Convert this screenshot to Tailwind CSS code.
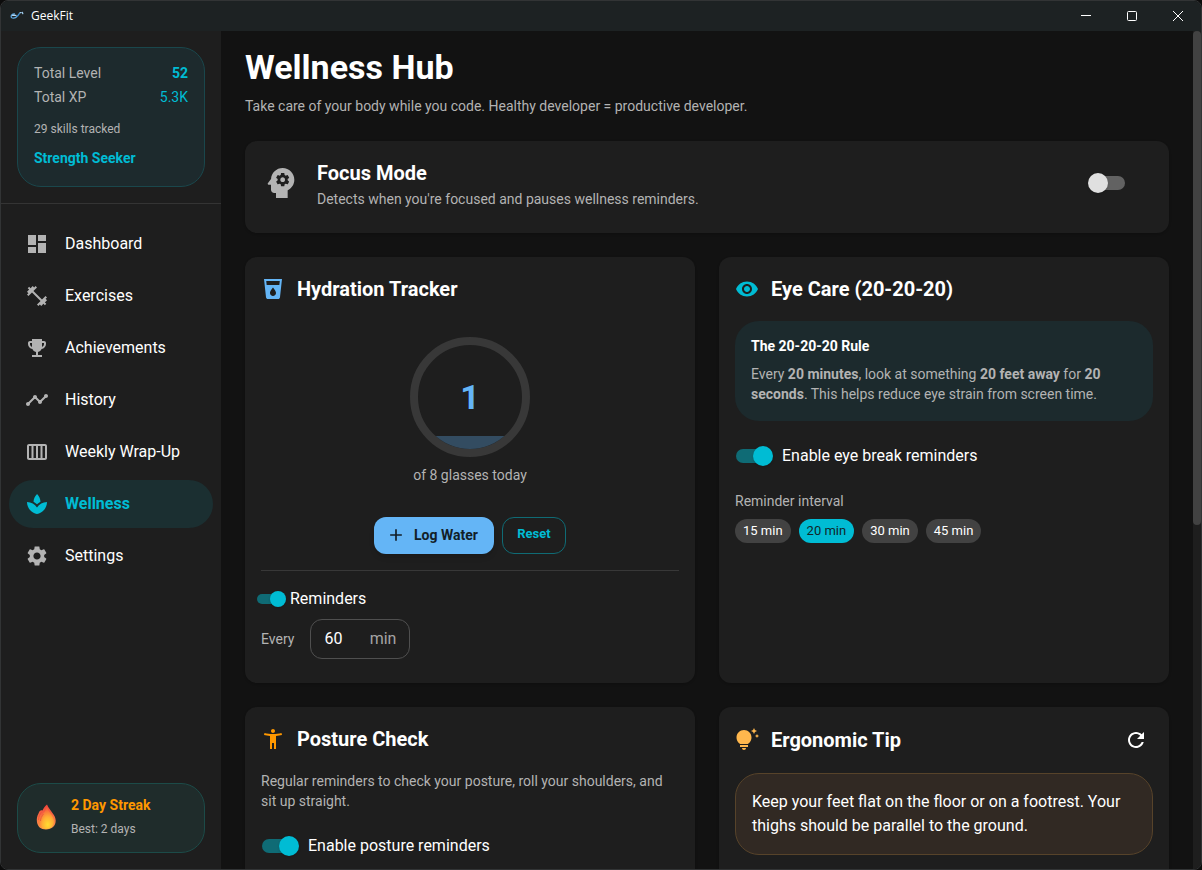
<!DOCTYPE html>
<html lang="en">
<head>
  <meta charset="UTF-8" />
  <meta name="viewport" content="width=device-width, initial-scale=1.0"/>
  <title>GeekFit</title>
  <script src="https://cdn.jsdelivr.net/npm/@tailwindcss/browser@4"></script>
</head>
<body class="h-screen bg-[#0c0c0c] font-['Roboto',sans-serif] text-base text-white">

  <div class="flex h-full flex-col overflow-hidden rounded-lg border border-[#323435] bg-[#121212]">

    <!-- Title bar -->
    <header class="flex h-[30px] shrink-0 items-center bg-[#1d2223] pl-[9px]">
      <svg class="mr-[7px] h-3.5 w-3.5" viewBox="0 0 14 14" fill="none" stroke-linecap="round" stroke-width="1.3">
        <path d="M4.5 5C2 5 .8 6.700 1.200 8.100c.5 1.500 4.300 1.300 5.700-.6" stroke="#5fa8e0"/>
        <path d="M2.500 6.300h3.500" stroke="#b9d7ee"/>
        <path d="M7.300 7c1.200-.3 1.400-2.400 2.300-2.400" stroke="#3d8fd0"/>
        <path d="M10 3.600h1M12.300 3.300l.5 1.400" stroke="#9cc8e8"/>
      </svg>
      <span class="flex-1 font-['Open_Sans',sans-serif] text-xs">GeekFit</span>
      <button aria-label="Minimize" class="flex h-full w-[46px] items-center justify-center">
        <svg class="h-2.5 w-2.5" viewBox="0 0 10 10" stroke="#fff"><path d="M0 4.500h10"/></svg>
      </button>
      <button aria-label="Maximize" class="flex h-full w-[46px] items-center justify-center">
        <svg class="h-2.5 w-2.5" viewBox="0 0 10 10" fill="none" stroke="#fff"><rect x=".5" y=".5" width="9" height="9" rx="1"/></svg>
      </button>
      <button aria-label="Close" class="flex h-full w-[46px] items-center justify-center">
        <svg class="h-2.5 w-2.5" viewBox="0 0 10 10" stroke="#fff"><path d="M0 0l10 10M10 0L0 10"/></svg>
      </button>
    </header>

    <div class="flex min-h-0 flex-1">

      <!-- Sidebar -->
      <aside class="flex w-[220px] shrink-0 flex-col bg-[#1e1e1e]">
        <div class="m-4 rounded-3xl border border-[#1a474c] bg-[#1d2a2d] px-4 pt-[15px] pb-[17px] text-sm leading-5 text-[#b3b3b3]">
          <div class="flex justify-between"><span>Total Level</span><span class="font-bold text-[#00bcd4]">52</span></div>
          <div class="mt-1 flex justify-between"><span>Total XP</span><span class="text-[#00bcd4]">5.3K</span></div>
          <p class="mt-3.5 text-xs leading-4">29 skills tracked</p>
          <p class="mt-2.5 leading-[22px] font-bold text-[#00bcd4]">Strength Seeker</p>
        </div>

        <nav class="flex flex-1 flex-col gap-1 border-t border-[#343434] px-2 py-4">
          <a href="#" class="flex h-12 items-center gap-4 rounded-full px-4">
            <svg class="h-6 w-6 fill-[#b3b3b3]" viewBox="0 0 24 24"><path d="M3 13h8V3H3zm0 8h8v-6H3zm10 0h8V11h-8zm0-18v6h8V3z"/></svg>
            Dashboard
          </a>
          <a href="#" class="flex h-12 items-center gap-4 rounded-full px-4">
            <svg class="h-6 w-6 fill-[#b3b3b3]" viewBox="0 0 24 24"><path d="M20.57 14.86 22 13.43 20.57 12 17 15.57 8.43 7 12 3.43 10.57 2 9.14 3.43 7.71 2 5.57 4.14 4.14 2.71 2.71 4.14l1.43 1.43L2 7.71l1.43 1.43L2 10.57 3.43 12 7 8.43 15.57 17 12 20.57 13.43 22l1.43-1.43L16.29 22l2.14-2.14 1.43 1.43 1.43-1.43-1.43-1.43L22 16.29z"/></svg>
            Exercises
          </a>
          <a href="#" class="flex h-12 items-center gap-4 rounded-full px-4">
            <svg class="h-6 w-6 fill-[#b3b3b3]" viewBox="0 0 24 24"><path d="M19 5h-2V3H7v2H5c-1.1 0-2 .9-2 2v1c0 2.55 1.92 4.63 4.39 4.94.63 1.5 1.98 2.63 3.61 2.96V19H7v2h10v-2h-4v-3.1c1.63-.33 2.98-1.46 3.61-2.96C19.08 12.63 21 10.55 21 8V7c0-1.1-.9-2-2-2M5 8V7h2v3.82C5.84 10.4 5 9.3 5 8m14 0c0 1.3-.84 2.4-2 2.82V7h2z"/></svg>
            Achievements
          </a>
          <a href="#" class="flex h-12 items-center gap-4 rounded-full px-4">
            <svg class="h-6 w-6 fill-[#b3b3b3]" viewBox="0 0 24 24"><path d="M23 8c0 1.1-.9 2-2 2-.18 0-.35-.02-.51-.07l-3.56 3.55c.05.16.07.34.07.52 0 1.1-.9 2-2 2s-2-.9-2-2c0-.18.02-.36.07-.52l-2.55-2.55c-.16.05-.34.07-.52.07s-.36-.02-.52-.07l-4.55 4.56c.05.16.07.33.07.51 0 1.1-.9 2-2 2s-2-.9-2-2 .9-2 2-2c.18 0 .35.02.51.07l4.56-4.55C8.02 9.36 8 9.18 8 9c0-1.1.9-2 2-2s2 .9 2 2c0 .18-.02.36-.07.52l2.55 2.55c.16-.05.34-.07.52-.07s.36.02.52.07l3.55-3.56C19.02 8.35 19 8.18 19 8c0-1.1.9-2 2-2s2 .9 2 2"/></svg>
            History
          </a>
          <a href="#" class="flex h-12 items-center gap-4 rounded-full px-4">
            <svg class="h-6 w-6 fill-[#b3b3b3]" viewBox="0 0 24 24"><path d="M20 4H4c-1.1 0-2 .9-2 2v12c0 1.1.9 2 2 2h16c1.1 0 2-.9 2-2V6c0-1.1-.9-2-2-2m-7 2h2.500v12H13zm-2 12H8.500V6H11zM4 6h2.500v12H4zm16 12h-2.500V6H20z"/></svg>
            Weekly Wrap-Up
          </a>
          <a href="#" aria-current="page" class="flex h-12 items-center gap-4 rounded-full bg-[#1b2f31] px-4 font-bold text-[#00bcd4]">
            <svg class="h-6 w-6 fill-[#00bcd4]" viewBox="0 0 24 24"><path d="M15.49 9.63c-.18-2.79-1.31-5.51-3.43-7.63-2.14 2.14-3.32 4.86-3.55 7.63 1.28.68 2.46 1.56 3.49 2.63 1.03-1.06 2.21-1.94 3.49-2.63M12 15.45C9.85 12.17 6.18 10 2 10c0 5.32 3.36 9.82 8.03 11.49.63.23 1.29.4 1.97.51.68-.12 1.33-.29 1.97-.51C18.64 19.82 22 15.32 22 10c-4.18 0-7.85 2.17-10 5.45"/></svg>
            Wellness
          </a>
          <a href="#" class="flex h-12 items-center gap-4 rounded-full px-4">
            <svg class="h-6 w-6 fill-[#b3b3b3]" viewBox="0 0 24 24"><path d="M19.14 12.94c.04-.3.06-.61.06-.94 0-.32-.02-.64-.07-.94l2.03-1.58c.18-.14.23-.41.12-.61l-1.92-3.32c-.12-.22-.37-.29-.59-.22l-2.39.96c-.5-.38-1.03-.7-1.62-.94l-.36-2.54c-.04-.24-.24-.41-.48-.41h-3.84c-.24 0-.43.17-.47.41l-.36 2.54c-.59.24-1.13.57-1.62.94l-2.39-.96c-.22-.08-.47 0-.59.22L2.74 8.87c-.12.21-.08.47.12.61l2.03 1.58c-.05.3-.09.63-.09.94s.02.64.07.94l-2.03 1.58c-.18.14-.23.41-.12.61l1.92 3.32c.12.22.37.29.59.22l2.39-.96c.5.38 1.03.7 1.62.94l.36 2.54c.05.24.24.41.48.41h3.84c.24 0 .44-.17.47-.41l.36-2.54c.59-.24 1.13-.56 1.62-.94l2.39.96c.22.08.47 0 .59-.22l1.92-3.32c.12-.22.07-.47-.12-.61zM12 15.600c-1.980 0-3.600-1.620-3.600-3.600s1.620-3.600 3.600-3.600 3.600 1.620 3.600 3.600-1.620 3.600-3.600 3.600"/></svg>
            Settings
          </a>
        </nav>

        <div class="m-4 flex items-center gap-2 rounded-3xl border border-[#1c4b48] bg-[#1f2c2b] px-3 pt-[11px] pb-[13px]">
          <svg class="h-[26px] w-[33px]" viewBox="0 0 33 26">
            <defs>
              <linearGradient id="flame" x1="0" y1="0" x2="0" y2="1">
                <stop offset="0" stop-color="#f0443c"/>
                <stop offset="1" stop-color="#ff9a4a"/>
              </linearGradient>
              <radialGradient id="glow" cx=".6" cy=".8" r=".7">
                <stop offset="0" stop-color="#ffdc30"/>
                <stop offset=".5" stop-color="#ffae35"/>
                <stop offset="1" stop-color="#f8623c"/>
              </radialGradient>
            </defs>
            <path fill="url(#flame)" d="M8.500 9.500c-1.500 3-1.900 5-1.600 8 .5 5 4 8 9 8 6 0 9.800-3.600 9.800-9 0-6-5.700-9-8.700-16-2.500 2-3.500 4-4.500 6-.9-.6-3-.8-4 3z"/>
            <path fill="url(#glow)" d="M17 3c1 5 7 8.500 7 14 0 5-3.500 8-8 8s-7.500-3-7.500-7c0-3.500 2-5 4-7.500S16 6 17 3z"/>
            <path d="M11.500 8c-1.500 2.500-3 4.500-3 8M13.500 10c-2 2.500-3 4.500-3 7" fill="none" stroke="#e8503c" stroke-width=".8"/>
          </svg>
          <div>
            <p class="text-sm leading-5 font-bold text-[#ff9800]">2 Day Streak</p>
            <p class="mt-1 text-xs leading-5 text-[#b3b3b3]">Best: 2 days</p>
          </div>
        </div>
      </aside>

      <!-- Content -->
      <main class="min-w-0 flex-1 overflow-hidden px-6 pt-4">
        <h1 class="text-[34px] leading-10 font-bold">Wellness Hub</h1>
        <p class="mt-2 text-sm leading-[22px] text-[#b3b3b3]">Take care of your body while you code. Healthy developer = productive developer.</p>

        <section class="mt-6 flex items-center gap-4 rounded-xl bg-[#1e1e1e] px-4 pt-4 pb-6 shadow-sm">
          <svg class="h-10 w-10 fill-[#b3b3b3]" viewBox="0 0 24 24">
            <path d="M13 8.570c-.79 0-1.430.64-1.430 1.430s.64 1.430 1.430 1.430 1.430-.64 1.430-1.430-.64-1.430-1.430-1.430"/>
            <path d="M13 3C9.250 3 6.200 5.940 6.020 9.640L4.100 12.200c-.25.33-.01.8.4.8H6v3c0 1.100.9 2 2 2h1v3h7v-4.690c2.370-1.120 4-3.510 4-6.310 0-3.860-3.120-7-7-7m3 7c0 .13-.01.26-.02.39l.83.66c.08.06.1.16.05.25l-.8 1.390c-.05.09-.16.12-.24.09l-.99-.4c-.21.16-.43.29-.67.39L14 13.830c-.01.1-.1.17-.2.17h-1.600c-.1 0-.18-.07-.2-.17l-.15-1.060c-.25-.1-.47-.23-.68-.39l-.99.4c-.09.03-.2 0-.25-.09l-.8-1.390c-.05-.08-.03-.19.05-.25l.84-.66c-.01-.13-.02-.26-.02-.39s.02-.27.04-.39l-.85-.66c-.08-.06-.1-.16-.05-.26l.8-1.380c.05-.09.15-.12.24-.09l1 .4c.2-.15.43-.29.67-.39L12 6.170c.02-.1.1-.17.2-.17h1.600c.1 0 .18.07.2.17l.15 1.060c.24.1.46.23.67.39l1-.4c.09-.03.2 0 .24.09l.8 1.380c.05.09.03.2-.05.26l-.85.66c.03.12.04.25.04.39"/>
          </svg>
          <div class="flex-1">
            <h2 class="text-xl leading-8 font-bold"><label for="focusMode">Focus Mode</label></h2>
            <p class="text-sm leading-5 text-[#b3b3b3]">Detects when you're focused and pauses wellness reminders.</p>
          </div>
          <input id="focusMode" type="checkbox" role="switch" class="relative mr-7 h-[14px] w-[34px] appearance-none rounded-full bg-[#626262] before:absolute before:-top-[3px] before:-left-[3px] before:h-5 before:w-5 before:rounded-full before:bg-[#e0e0e0] before:shadow-sm checked:bg-[#0f6b75] checked:before:left-[17px] checked:before:bg-[#00bcd4]"/>
        </section>

        <div class="mt-6 grid grid-cols-2 gap-6">

          <!-- Hydration -->
          <section class="rounded-xl bg-[#1e1e1e] px-4 pt-4 pb-6 shadow-sm">
            <div class="flex items-center gap-3">
              <svg class="h-6 w-6 fill-[#64b5f6]" viewBox="0 0 24 24"><path d="m3 2 2.010 18.230C5.130 21.230 5.970 22 7 22h10c1.030 0 1.870-.77 1.990-1.770L21 2zm9 17c-1.660 0-3-1.340-3-3 0-2 3-5.400 3-5.400s3 3.400 3 5.400c0 1.660-1.340 3-3 3m6.330-11H5.670l-.44-4h13.550z"/></svg>
              <h2 class="text-xl leading-8 font-bold">Hydration Tracker</h2>
            </div>
            <div class="mt-8 flex flex-col items-center">
              <div class="relative flex h-[120px] w-[120px] items-center justify-center overflow-hidden rounded-full border-8 border-[#383838]">
                <div class="absolute inset-x-0 bottom-0 bg-[#334c61]" style="height: 12.5%"></div>
                <span class="relative text-[34px] leading-10 font-bold text-[#64b5f6]">1</span>
              </div>
              <p class="mt-2 text-sm leading-5 text-[#b3b3b3]">of 8 glasses today</p>
            </div>
            <div class="mt-8 flex justify-center gap-2 text-sm font-bold">
              <button class="flex h-[37px] w-[120px] items-center justify-center gap-2 rounded-xl bg-[#64b5f6] pr-1 pb-0.5 text-[#121e28] shadow-md">
                <svg class="h-5 w-5 fill-current" viewBox="0 0 24 24"><path d="M19 13h-6v6h-2v-6H5v-2h6V5h2v6h6z"/></svg>
                Log Water
              </button>
              <button class="h-[37px] w-16 rounded-xl border border-[#0f6b75] pb-0.5 text-[13px] text-[#00bcd4]">Reset</button>
            </div>
            <hr class="mt-4 border-[#383838]"/>
            <label class="mt-4 -ml-1 flex h-6 items-center gap-[7px]">
              <input type="checkbox" role="switch" checked class="relative h-2.5 w-[26px] appearance-none rounded-full bg-[#626262] before:absolute before:-top-[3px] before:-left-[3px] before:h-4 before:w-4 before:rounded-full before:bg-[#e0e0e0] before:shadow-sm checked:bg-[#0f6b75] checked:before:left-[13px] checked:before:bg-[#00bcd4]"/>
              Reminders
            </label>
            <div class="mt-2 flex items-center gap-4">
              <label for="every" class="text-sm leading-5 text-[#b3b3b3]">Every</label>
              <div class="flex h-10 w-[100px] items-center justify-between rounded-xl border border-[#4f4f4f] px-[13px]">
                <input id="every" type="text" inputmode="numeric" value="60" class="w-8 min-w-0 bg-transparent outline-none"/>
                <span class="text-[#a5a5a5]">min</span>
              </div>
            </div>
          </section>

          <!-- Eye care -->
          <section class="rounded-xl bg-[#1e1e1e] px-4 pt-4 pb-6 shadow-sm">
            <div class="flex items-center gap-3">
              <svg class="h-6 w-6 fill-[#00bcd4]" viewBox="0 0 24 24"><path d="M12 4.500C7 4.500 2.730 7.610 1 12c1.730 4.390 6 7.500 11 7.500s9.270-3.110 11-7.500c-1.730-4.390-6-7.500-11-7.500M12 17c-2.760 0-5-2.240-5-5s2.240-5 5-5 5 2.240 5 5-2.240 5-5 5m0-8c-1.660 0-3 1.340-3 3s1.340 3 3 3 3-1.340 3-3-1.340-3-3-3"/></svg>
              <h2 class="text-xl leading-8 font-bold">Eye Care (20-20-20)</h2>
            </div>
            <div class="mt-4 rounded-3xl bg-[#1c2a2d] px-4 pt-[15px] pb-[17px] text-sm leading-5">
              <h3 class="font-bold">The 20-20-20 Rule</h3>
              <p class="mt-2 text-[#b3b3b3]">Every <strong>20 minutes</strong>, look at something <strong>20 feet away</strong> for <strong>20 seconds</strong>. This helps reduce eye strain from screen time.</p>
            </div>
            <label class="mt-4 ml-px flex h-[38px] items-center gap-3">
              <input type="checkbox" role="switch" checked class="relative h-[14px] w-[34px] appearance-none rounded-full bg-[#626262] before:absolute before:-top-[3px] before:-left-[3px] before:h-5 before:w-5 before:rounded-full before:bg-[#e0e0e0] before:shadow-sm checked:bg-[#0f6b75] checked:before:left-[17px] checked:before:bg-[#00bcd4]"/>
              Enable eye break reminders
            </label>
            <p class="mt-4 text-sm leading-5 text-[#b3b3b3]">Reminder interval</p>
            <div class="mt-2 flex gap-2 text-[13px]">
              <button class="h-6 rounded-full bg-[#424242] px-2">15 min</button>
              <button class="h-6 rounded-full bg-[#00bcd4] px-2 text-[#10262a]">20 min</button>
              <button class="h-6 rounded-full bg-[#424242] px-2">30 min</button>
              <button class="h-6 rounded-full bg-[#424242] px-2">45 min</button>
            </div>
          </section>

          <!-- Posture -->
          <section class="rounded-xl bg-[#1e1e1e] px-4 pt-4 pb-6 shadow-sm">
            <div class="flex items-center gap-3">
              <svg class="h-6 w-6 fill-[#ff9800]" viewBox="0 0 24 24"><path d="M20.500 6c-2.610.7-5.670 1-8.500 1s-5.890-.3-8.500-1L3 8c1.860.5 4 .83 6 1v13h2v-6h2v6h2V9c2-.17 4.140-.5 6-1zM12 6c1.100 0 2-.9 2-2s-.9-2-2-2-2 .9-2 2 .9 2 2 2"/></svg>
              <h2 class="text-xl leading-8 font-bold">Posture Check</h2>
            </div>
            <p class="mt-4 text-sm leading-5 text-[#b3b3b3]">Regular reminders to check your posture, roll your shoulders, and sit up straight.</p>
            <label class="mt-4 ml-px flex h-[38px] items-center gap-3">
              <input type="checkbox" role="switch" checked class="relative h-[14px] w-[34px] appearance-none rounded-full bg-[#626262] before:absolute before:-top-[3px] before:-left-[3px] before:h-5 before:w-5 before:rounded-full before:bg-[#e0e0e0] before:shadow-sm checked:bg-[#0f6b75] checked:before:left-[17px] checked:before:bg-[#00bcd4]"/>
              Enable posture reminders
            </label>
          </section>

          <!-- Ergonomic tip -->
          <section class="rounded-xl bg-[#1e1e1e] px-4 pt-4 pb-6 shadow-sm">
            <div class="flex items-center gap-3">
              <svg class="h-6 w-6 fill-[#ffb74d]" viewBox="0 0 24 24"><path d="M7 20h4c0 1.100-.9 2-2 2s-2-.9-2-2m-2-1h8v-2H5zm11.500-9.500c0 3.820-2.660 5.860-3.770 6.500H5.270c-1.110-.64-3.770-2.680-3.770-6.500C1.500 5.360 4.860 2 9 2s7.500 3.360 7.500 7.500m4.870-2.130L20 8l1.370.63L22 10l.63-1.370L24 8l-1.370-.63L22 6zM19 6l.94-2.060L22 3l-2.060-.94L19 0l-.94 2.060L16 3l2.060.94z"/></svg>
              <h2 class="flex-1 text-xl leading-8 font-bold">Ergonomic Tip</h2>
              <button aria-label="New tip" class="rounded-full p-[5px]">
                <svg class="h-6 w-6 fill-white" viewBox="0 0 24 24"><path d="M17.650 6.350C16.200 4.900 14.210 4 12 4c-4.420 0-7.990 3.580-7.990 8s3.570 8 7.990 8c3.730 0 6.840-2.550 7.730-6h-2.080c-.82 2.330-3.040 4-5.650 4-3.310 0-6-2.690-6-6s2.690-6 6-6c1.660 0 3.140.69 4.220 1.780L13 11h7V4z"/></svg>
              </button>
            </div>
            <p class="mt-4 rounded-3xl border border-[#57432a] bg-[#312923] p-4 leading-6">Keep your feet flat on the floor or on a footrest. Your thighs should be parallel to the ground.</p>
          </section>
        </div>
      </main>

      <!-- Scrollbar -->
      <div class="w-2 shrink-0 bg-[#1e1e1e]">
        <div class="h-[59%] rounded-full bg-[#424242]"></div>
      </div>
    </div>
  </div>
</body>
</html>
